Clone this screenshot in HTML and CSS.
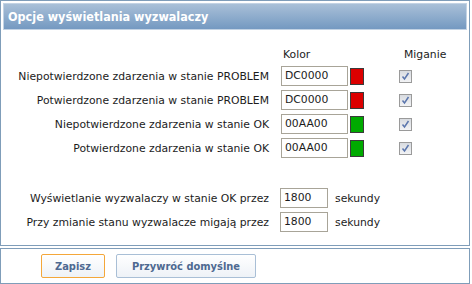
FILE: index.html
```html
<!DOCTYPE html>
<html lang="pl">
<head>
<meta charset="utf-8">
<link rel="stylesheet" href="styles.css">
</head>
<body>
<div class="panel">
  <div class="header">Opcje wyświetlania wyzwalaczy</div>
  <div class="grid">
    <div></div>
    <div class="colhead kolor">Kolor</div>
    <div></div>
    <div class="colhead migan">Miganie</div>

    <div class="label">Niepotwierdzone zdarzenia w stanie PROBLEM</div>
    <div class="cell inp"><span class="input">DC0000</span></div>
    <div class="cell"><span class="swatch red"></span></div>
    <div class="cell chk"><span class="checkbox"><svg width="11" height="11" viewBox="0 0 11 11"><path d="M2.5 5.5 L4.5 8 L8.5 2" fill="none" stroke="#5b76ad" stroke-width="1.5"/></svg></span></div>

    <div class="label">Potwierdzone zdarzenia w stanie PROBLEM</div>
    <div class="cell inp"><span class="input">DC0000</span></div>
    <div class="cell"><span class="swatch red"></span></div>
    <div class="cell chk"><span class="checkbox"><svg width="11" height="11" viewBox="0 0 11 11"><path d="M2.5 5.5 L4.5 8 L8.5 2" fill="none" stroke="#5b76ad" stroke-width="1.5"/></svg></span></div>

    <div class="label">Niepotwierdzone zdarzenia w stanie OK</div>
    <div class="cell inp"><span class="input">00AA00</span></div>
    <div class="cell"><span class="swatch green"></span></div>
    <div class="cell chk"><span class="checkbox"><svg width="11" height="11" viewBox="0 0 11 11"><path d="M2.5 5.5 L4.5 8 L8.5 2" fill="none" stroke="#5b76ad" stroke-width="1.5"/></svg></span></div>

    <div class="label">Potwierdzone zdarzenia w stanie OK</div>
    <div class="cell inp"><span class="input">00AA00</span></div>
    <div class="cell"><span class="swatch green"></span></div>
    <div class="cell chk"><span class="checkbox"><svg width="11" height="11" viewBox="0 0 11 11"><path d="M2.5 5.5 L4.5 8 L8.5 2" fill="none" stroke="#5b76ad" stroke-width="1.5"/></svg></span></div>
  </div>

  <div class="grid2">
    <div class="label">Wyświetlanie wyzwalaczy w stanie OK przez</div>
    <div class="cell inp2"><span class="input short">1800</span></div>
    <div class="cell unit">sekundy</div>

    <div class="label">Przy zmianie stanu wyzwalacze migają przez</div>
    <div class="cell inp2"><span class="input short">1800</span></div>
    <div class="cell unit">sekundy</div>
  </div>
</div>
<div class="footer">
  <button class="btn primary">Zapisz</button>
  <button class="btn">Przywróć domyślne</button>
</div>
</body>
</html>
```

FILE: styles.css
```css
html, body {
  margin: 0;
  padding: 0;
  background: #ffffff;
}
body {
  width: 470px;
  font-family: "DejaVu Sans", Verdana, sans-serif;
  font-size: 10.8px;
  color: #1c1c1c;
}
.panel {
  border: 1px solid #7f9db9;
  padding: 2px;
  height: 240px;
}
.header {
  height: 25px;
  border: 1px solid #c3d3e4;
  background: linear-gradient(#a9c0d8, #7499c1);
  color: #ffffff;
  font-family: "DejaVu Sans Condensed", "DejaVu Sans", sans-serif;
  font-weight: bold;
  font-size: 12.5px;
  line-height: 25px;
  padding-left: 4px;
}
.grid {
  display: grid;
  grid-template-columns: 266px 79px 16px 1fr;
  grid-template-rows: 18px repeat(4, 24px);
  margin-top: 16px;
}
.label {
  display: flex;
  align-items: center;
  justify-content: flex-end;
  text-align: right;
  height: 24px;
  white-space: nowrap;
}
.colhead {
  line-height: 18px;
}
.kolor {
  padding-left: 14px;
}
.migan {
  padding-left: 40px;
}
.cell {
  display: flex;
  align-items: center;
  height: 24px;
}
.inp {
  padding-left: 12px;
}
.input {
  box-sizing: border-box;
  width: 67px;
  height: 20px;
  border: 1px solid #a8a498;
  padding-left: 3px;
  line-height: 18px;
  background: #fff;
}
.input.short {
  width: 48px;
}
.swatch {
  box-sizing: border-box;
  width: 15px;
  height: 17px;
  margin-left: 2px;
  border: 1px solid #3a3a3a;
}
.red { background: #dc0000; }
.green { background: #00aa00; }
.chk {
  padding-left: 35px;
}
.checkbox {
  box-sizing: border-box;
  width: 13px;
  height: 13px;
  border: 1px solid #9a9a9a;
  background: linear-gradient(#d8dbe0, #f2f3f5);
  display: flex;
  align-items: center;
  justify-content: center;
}
.checkbox svg {
  display: block;
}
.grid2 {
  display: grid;
  grid-template-columns: 266px 59px 1fr;
  grid-template-rows: repeat(2, 24px);
  margin-top: 26px;
}
.inp2 {
  padding-left: 11px;
}
.unit {
  padding-left: 7px;
}
.footer {
  box-sizing: border-box;
  margin-top: 2px;
  border: 1px solid #7f9db9;
  height: 36px;
  padding: 5px 0 0 40px;
  display: flex;
  gap: 11px;
  align-items: flex-start;
}
.btn {
  box-sizing: border-box;
  height: 24px;
  border: 1px solid #a9bfd6;
  border-radius: 2px;
  background: linear-gradient(#ffffff, #eef2f7);
  color: #4e6991;
  font-family: "DejaVu Sans Condensed", "DejaVu Sans", sans-serif;
  font-weight: bold;
  font-size: 11px;
  padding: 0;
  width: 140px;
}
.btn.primary {
  border-color: #f4a73a;
  width: 64px;
}
```
